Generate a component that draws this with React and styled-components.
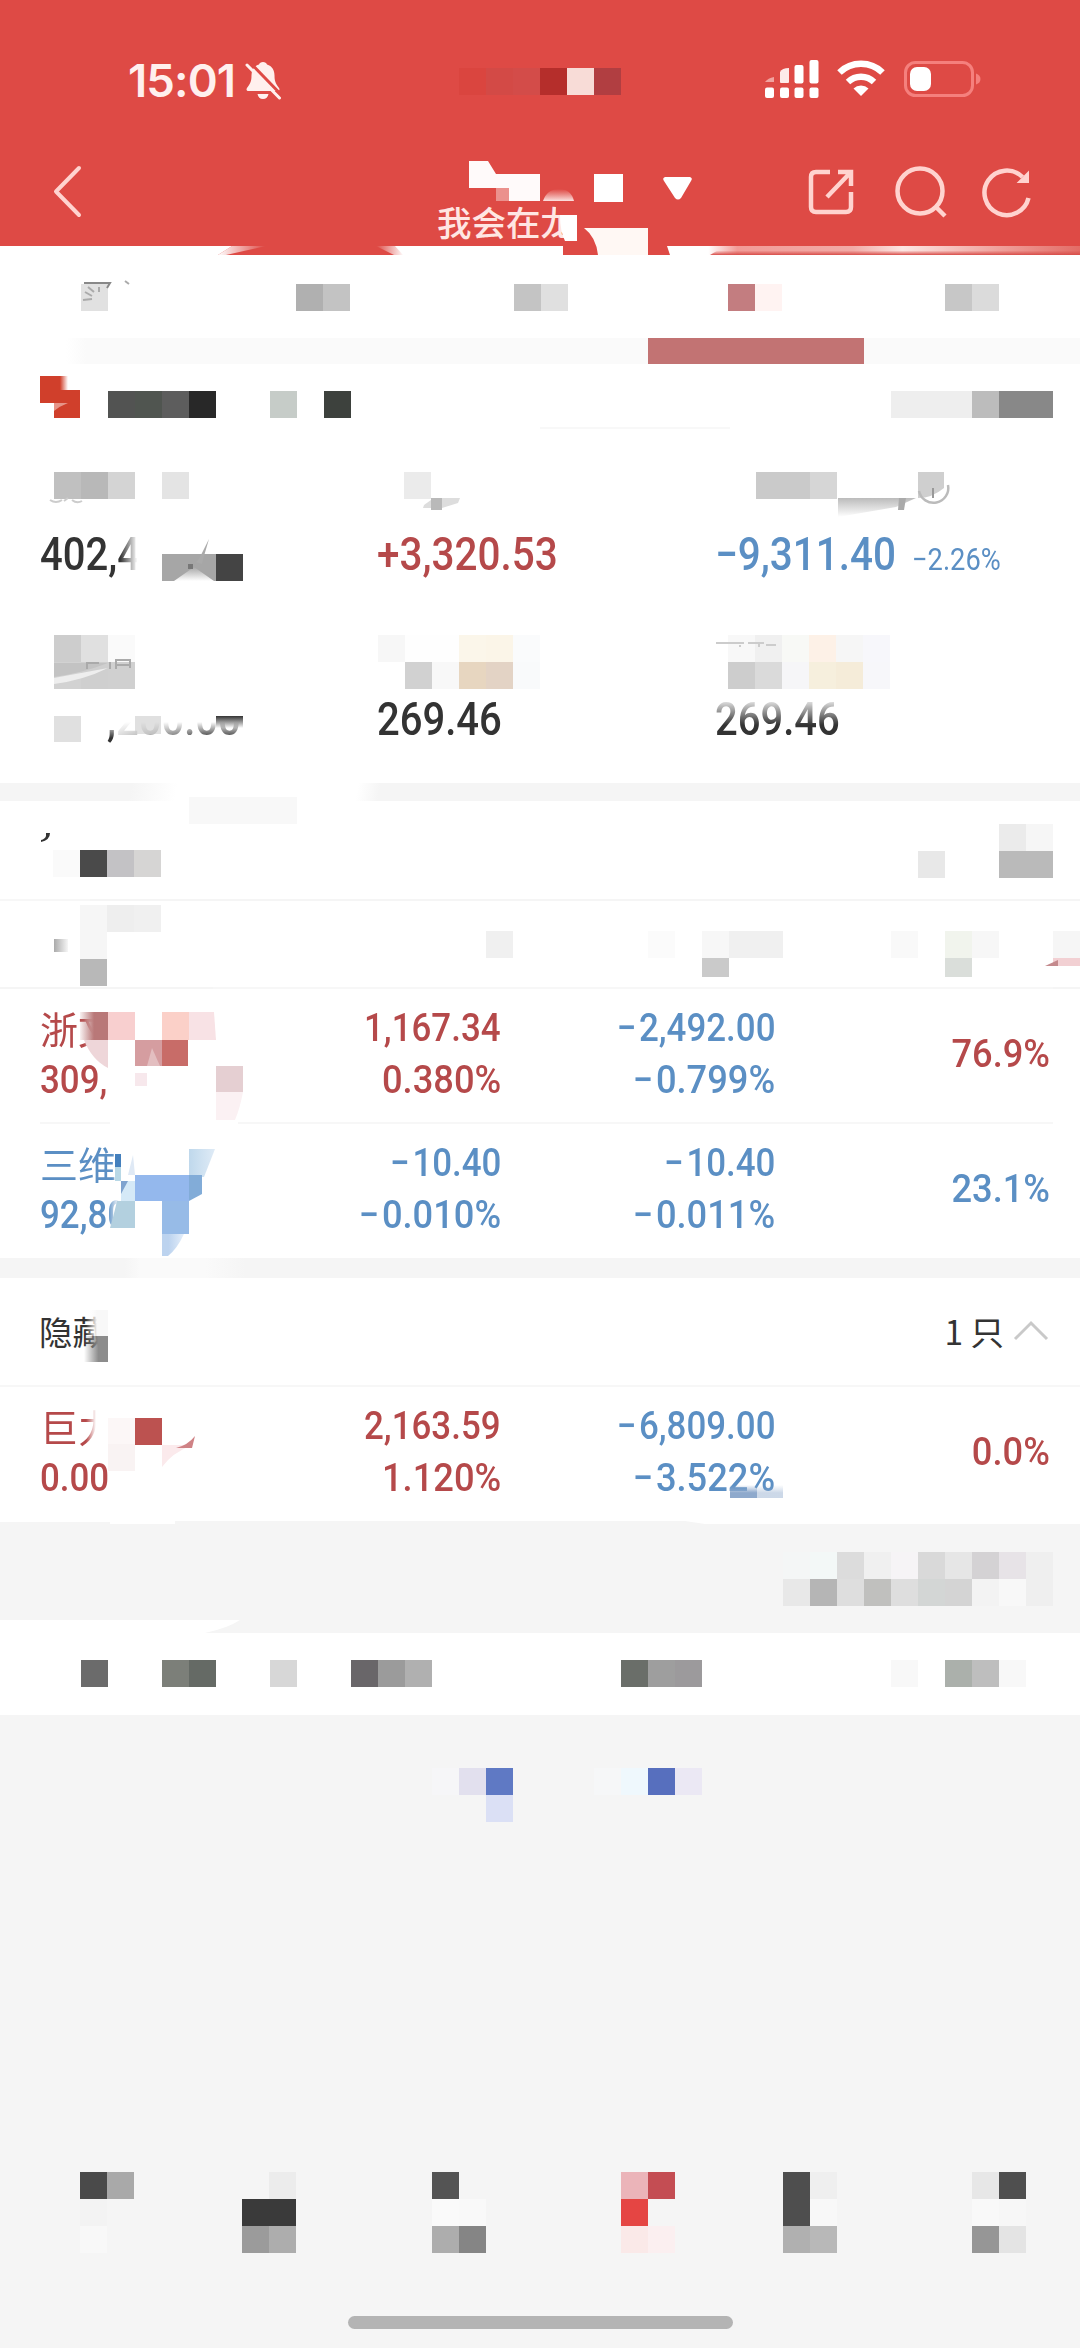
import React from "react";
import styled, { createGlobalStyle } from "styled-components";

const RED = "#b5494a";
const BLUE = "#5b8fc4";

const GlobalStyle = createGlobalStyle`
  body {
    margin: 0;
    background: #f5f5f5;
  }
  * {
    box-sizing: border-box;
  }
`;

const Page = styled.div`
  width: 1080px;
  height: 2348px;
  display: flex;
  flex-direction: column;
  background: #f5f5f5;
  color: #333;
  font-family: Roboto, "Noto Sans CJK SC", sans-serif;
  overflow: hidden;
`;

/* Mosaic: 27px cells, "" leaves a cell empty */
const MosaicGrid = styled.div`
  display: grid;
  grid-template-columns: repeat(${(p) => p.$cols}, 27px);
  grid-auto-rows: 27px;
  flex: none;
  align-self: flex-start;
  margin-left: ${(p) => p.$left || 0}px;
  margin-top: ${(p) => p.$top || 0}px;
`;

const Cell = styled.i`
  background: ${(p) => p.$color || "transparent"};
`;

const Mosaic = ({ rows, left, top }) => {
  const cells = rows.map((r) => r.split(","));
  return (
    <MosaicGrid $cols={cells[0].length} $left={left} $top={top}>
      {cells.flat().map((c, i) => (
        <Cell key={i} $color={c && `#${c}`} />
      ))}
    </MosaicGrid>
  );
};

/* Smudges lying over the content of a section */
const Overlay = styled.svg`
  position: absolute;
  left: 0;
  top: ${(p) => p.$top || 0}px;
  pointer-events: none;
  overflow: visible;
`;

const Header = styled.header`
  position: relative;
  height: 255px;
  flex: none;
  background: #de4a45;
`;

const StatusBar = styled.div`
  height: 134px;
  display: flex;
  align-items: flex-start;
  padding: 60px 99px 0 128px;
`;

const StatusIcons = styled.div`
  display: flex;
  gap: 18px;
`;

const Time = styled.span`
  width: 117px;
  font-family: Inter, sans-serif;
  font-size: 45.5px;
  line-height: 42px;
  font-weight: 600;
  letter-spacing: -0.9px;
  color: #fff0ee;
`;

const Push = styled.span`
  flex: 1;
`;

const NavBar = styled.div`
  height: 121px;
  display: flex;
  align-items: flex-start;
  padding: 30px 45px 0 51px;
`;

const TitleBox = styled.div`
  width: 260px;
  margin-left: 354px;
  height: 91px;
  display: flex;
  flex-direction: column;
  justify-content: flex-end;
`;

const Subtitle = styled.span`
  font-family: "Noto Sans CJK SC", sans-serif;
  font-size: 34.5px;
  font-weight: 500;
  line-height: 40px;
  margin-bottom: 14px;
  color: #ffe6e3;
  white-space: nowrap;
`;

const Tabs = styled.nav`
  position: relative;
  height: 83px;
  flex: none;
  display: grid;
  grid-template-columns: repeat(5, 216px);
  padding-top: 29px;
  background: #fff;
`;

const TabTrack = styled.div`
  height: 26px;
  flex: none;
  background: linear-gradient(90deg, #fff 66px, #fafafa 86px);
`;

const ActiveBar = styled.div`
  width: 216px;
  height: 27px;
  margin-left: 648px;
  background: #c27373;
`;

const Account = styled.section`
  height: 64px;
  flex: none;
  display: flex;
  padding: 0 27px 0 40px;
  background: #fff;
`;

const Stats = styled.section`
  position: relative;
  height: 355px;
  flex: none;
  display: grid;
  grid-template-columns: 337px 338px 365px;
  grid-template-rows: 163px 148px;
  padding: 44px 0 0 40px;
  background: #fff;
`;

const Stat = styled.div`
  display: flex;
  flex-direction: column;
`;

const StatLabel = styled.div`
  height: ${(p) => p.$height || 52}px;
`;

const StatValue = styled.div`
  display: flex;
  align-items: baseline;
  height: 60px;
  line-height: 60px;
  padding-left: ${(p) => p.$indent || 0}px;
  font-size: 46px;
  font-weight: 500;
  color: ${(p) => p.$color || "#333"};
  transform: scaleX(${(p) => p.$scale || 0.87});
  transform-origin: 0 50%;
  white-space: nowrap;
  -webkit-mask-image: ${(p) => p.$mask || "none"};
  mask-image: ${(p) => p.$mask || "none"};
`;

const Rate = styled.span`
  margin-left: 18px;
  font-size: 31px;
  font-weight: 400;
`;

const Band = styled.div`
  height: ${(p) => p.$height}px;
  flex: none;
  background: ${(p) => p.$fill || "#f5f5f5"};
`;

const Section = styled.section`
  position: relative;
  flex: none;
  display: flex;
  height: ${(p) => p.$height}px;
  background: ${(p) => p.$bg || "#fff"};
`;

const List = styled.div`
  position: relative;
  flex: none;
  background: #fff;
`;

const Row = styled.div`
  display: grid;
  grid-template-columns: 260px 201px 274px 275px;
  align-items: start;
  height: ${(p) => p.$height}px;
  padding: 13px 0 0 40px;
`;

const Line = styled.div`
  height: 2px;
  flex: none;
  background: #f7f7f7;
  margin: 0 ${(p) => p.$right || 0}px 0 ${(p) => p.$left || 0}px;
`;

const Pair = styled.div`
  display: flex;
  flex-direction: column;
  align-items: ${(p) => (p.$start ? "flex-start" : "flex-end")};
  height: 104px;
  justify-content: center;
  color: ${(p) => p.$color};
`;

const Num = styled.span`
  font-size: 39px;
  line-height: 52px;
  font-weight: 500;
  transform: scaleX(${(p) => (p.$percent ? 0.93 : 0.895)});
  transform-origin: ${(p) => (p.$start ? "0" : "100%")} 50%;
  white-space: nowrap;
  ${(p) => p.$fade && `
    -webkit-mask-image: linear-gradient(90deg, #000 ${p.$fade}px, transparent ${p.$fade + 12}px);
    mask-image: linear-gradient(90deg, #000 ${p.$fade}px, transparent ${p.$fade + 12}px);
  `}
`;

const Minus = styled.span`
  margin-right: 3px;
`;

const Name = styled.span`
  font-family: "Noto Sans CJK SC", sans-serif;
  font-size: 38px;
  line-height: 52px;
  white-space: nowrap;
  -webkit-mask-image: linear-gradient(90deg, #000 ${(p) => p.$fade}px, transparent ${(p) => p.$fade + 10}px);
  mask-image: linear-gradient(90deg, #000 ${(p) => p.$fade}px, transparent ${(p) => p.$fade + 10}px);
`;

const HiddenHead = styled.div`
  position: relative;
  height: 107px;
  flex: none;
  display: flex;
  align-items: center;
  justify-content: space-between;
  padding: 0 31px 2px 39px;
  background: #fff;
  font-family: "Noto Sans CJK SC", sans-serif;
  font-size: 33.5px;
  line-height: 40px;
`;

const Count = styled.span`
  display: flex;
  align-items: center;
  gap: 9px;
`;

const BottomNav = styled.nav`
  height: 82px;
  flex: none;
  display: grid;
  grid-template-columns: 161px 189px 190px 162px 188px 190px;
  margin-top: 350px;
`;

const HomeIndicator = styled.div`
  width: 385px;
  height: 13px;
  flex: none;
  margin: 62px 0 0 348px;
  border-radius: 7px;
  background: #b4b4b4;
`;

const BellOff = () => (
  <svg width="38" height="42" viewBox="0 0 38 42">
    <path d="M18 2c2 0 3.600 1 4 2.500 5 1.500 7.500 5.500 7.500 11 0 7 2 9 4.500 12.500 1 1.500.5 3-1.500 3h-29c-2 0-2.500-1.500-1.500-3C4.500 24.500 6.500 22.500 6.500 15.500c0-5.500 2.500-9.500 7.500-11C14.400 3 16 2 18 2zM12.500 34h11c-.5 3-2.500 5-5.500 5s-5-2-5.500-5z" fill="#fff0ee" />
    <path d="M4 1.500l32 33" stroke="#de4a45" strokeWidth="3" />
    <path d="M2 5l32.500 33" stroke="#fff0ee" strokeWidth="3" strokeLinecap="round" />
  </svg>
);

const Signal = () => (
  <svg width="54" height="40" viewBox="0 0 54 40">
    <path d="M0 22q3-4 9-5v5z" fill="#f1a39f" />
    <path d="M15 12q2-4 9-4v14q0 1-1 1h-7q-1 0-1-1z" fill="#fdebe9" />
    <rect x="29.500" y="5" width="9" height="18.500" rx="2" fill="#fff" />
    <rect x="44.500" y="0" width="9" height="23.500" rx="2" fill="#fff" />
    {[0, 15, 29.5, 44.5].map((x) => (
      <rect key={x} x={x} y="27.500" width="9" height="10.500" rx="2" fill="#fff" />
    ))}
  </svg>
);

const Wifi = () => (
  <svg width="48" height="38" viewBox="0 0 48 38">
    <g fill="none" stroke="#fff" strokeWidth="6.500">
      <path d="M2.500 12.500a31 31 0 0 1 43 0" />
      <path d="M11 22a19 19 0 0 1 26 0" />
    </g>
    <path d="M24 36l-7.500-7.500a11 11 0 0 1 15 0z" fill="#fff" />
  </svg>
);

const Battery = () => (
  <svg width="78" height="38" viewBox="0 0 78 38">
    <rect x="2.500" y="2.500" width="67" height="33" rx="10" fill="none" stroke="#f5807d" strokeWidth="3" />
    <rect x="7" y="7" width="21" height="24" rx="7" fill="#fff" />
    <path d="M73 13.500q4.500 1.500 4.500 5.500t-4.500 5.500z" fill="#f5807d" />
  </svg>
);

const BackIcon = () => (
  <svg width="32" height="56" viewBox="0 0 32 56">
    <path d="M28 4L5 27.500 28 51" fill="none" stroke="#ffd3cf" strokeWidth="4" strokeLinecap="round" strokeLinejoin="round" />
  </svg>
);

const Toolbar = () => (
  <svg width="232" height="56" viewBox="803 164 232 56" fill="none" stroke="#ffd3cf" strokeWidth="4.500">
    <path d="M830 172h-14q-5 0-5 5v30q0 5 5 5h30q5 0 5-5v-15" />
    <path d="M838 172h13v14M850 173l-23 24" />
    <circle cx="920" cy="191" r="22.500" />
    <path d="M936 207l9 9" />
    <path d="M1028.500 198a22.300 22.300 0 1 1-6-21" />
    <path d="M1028 173v9h-9z" fill="#ffd3cf" strokeWidth="2" />
  </svg>
);

const holdings = [
  { name: "浙文", fade: 44, amount: "309,", amountFade: 72, color: RED, day: ["1,167.34", "0.380%"], total: ["−2,492.00", "−0.799%"], part: "76.9%", height: 133 },
  { name: "三维", fade: 72, amount: "92,80", amountFade: 76, color: BLUE, day: ["−10.40", "−0.010%"], total: ["−10.40", "−0.011%"], part: "23.1%", height: 134 },
];

const hidden = { name: "巨力", fade: 46, amount: "0.00", amountFade: 90, color: RED, day: ["2,163.59", "1.120%"], total: ["−6,809.00", "−3.522%"], part: "0.0%", height: 137 };

const Amount = ({ value }) => (
  <Num $percent={value.endsWith("%")}>
    {value.startsWith("−") && <Minus>−</Minus>}
    {value.replace("−", "")}
  </Num>
);

const Holding = ({ item }) => (
  <Row $height={item.height}>
    <Pair $start $color={item.color}>
      <Name $fade={item.fade}>{item.name}</Name>
      <Num $start $fade={item.amountFade}>{item.amount}</Num>
    </Pair>
    <Pair $color={item.color}>
      <Amount value={item.day[0]} />
      <Amount value={item.day[1]} />
    </Pair>
    <Pair $color={BLUE}>
      <Amount value={item.total[0]} />
      <Amount value={item.total[1]} />
    </Pair>
    <Pair $color={item.color}>
      <Amount value={item.part} />
    </Pair>
  </Row>
);

const App = () => (
  <Page>
    <GlobalStyle />
    <Header>
      <StatusBar>
        <Time>15:01</Time>
        <BellOff />
        <Mosaic rows={["da453f,d34a46,d34c49,b52e2b,f8dcd7,b13e41"]} left={176} top={8} />
        <Push />
        <StatusIcons>
          <Signal />
          <Wifi />
          <Battery />
        </StatusIcons>
      </StatusBar>
      <NavBar>
        <BackIcon />
        <TitleBox>
          <Subtitle>我会在龙</Subtitle>
        </TitleBox>
        <Push />
        <Toolbar />
      </NavBar>
      <Overlay width="1080" height="256">
        <defs>
          <linearGradient id="streak" x1="0" x2="1">
            <stop offset="0" stopColor="#fff" />
            <stop offset=".1" stopColor="#fff" />
            <stop offset=".17" stopColor="#f29b97" />
            <stop offset=".45" stopColor="#f2aaa6" />
            <stop offset=".57" stopColor="#fde5e2" />
            <stop offset=".8" stopColor="#f0a19c" />
            <stop offset="1" stopColor="#e36c66" />
          </linearGradient>
          <linearGradient id="streakFall" x1="0" x2="0" y1="0" y2="1">
            <stop offset=".5" stopColor="#d84e4a" stopOpacity="0" />
            <stop offset="1" stopColor="#d84e4a" />
          </linearGradient>
          <linearGradient id="leftTaper" x1="0" x2="1">
            <stop offset="0" stopColor="#fff" />
            <stop offset="1" stopColor="#fff" stopOpacity="0" />
          </linearGradient>
          <linearGradient id="rightTaper" x1="0" x2="1">
            <stop offset="0" stopColor="#fff" stopOpacity="0" />
            <stop offset="1" stopColor="#fff" />
          </linearGradient>
          <linearGradient id="puff" x1="0" x2="0" y1="0" y2="1">
            <stop offset="0" stopColor="#f8cdca" stopOpacity="0" />
            <stop offset="1" stopColor="#fbe3e1" />
          </linearGradient>
        </defs>
        <path d="M469 161h19l8 13h44v27h-31q-3-9-13-13h-27z" fill="#fffafa" />
        <path d="M496 188h13v13h-13z" fill="#eb918d" />
        <path d="M543 201q4-12 16-12t15 12z" fill="url(#puff)" />
        <path d="M594 174h29v28h-29z" fill="#fff" />
        <path d="M665 177h25q3 1 1 4l-10 17q-3 3-6 0l-11-17q-2-3 1-4z" fill="#fff" />
        <path d="M556 204h20v11h-20z" fill="#de4a45" />
        <path d="M560 215h17v26h-12q-5-10-5-26z" fill="#fff" />
        <path d="M584 228h64v27h-50q-2-18-14-27z" fill="#fff8f4" />
        <path d="M0 246h232l-14 9H0zM395 246h168v9H403z" fill="#fff" />
        <path d="M232 246h34l-40 9h-8z" fill="url(#leftTaper)" />
        <path d="M376 246h20l8 9h-10z" fill="url(#rightTaper)" />
        <path d="M667 246h413v9H670z" fill="url(#streak)" />
        <path d="M725 246h355v9H710z" fill="url(#streakFall)" />
      </Overlay>
    </Header>

    <Tabs>
      <Mosaic rows={["e1e1e1"]} left={81} />
      <Mosaic rows={["b0b0b0,c3c3c3"]} left={80} />
      <Mosaic rows={["c4c4c4,e0e0e0"]} left={82} />
      <Mosaic rows={["c37d80,fff3f2"]} left={80} />
      <Mosaic rows={["c7c7c7,dbdbdb"]} left={81} />
      <Overlay width="140" height="60" $top={25}>
        <path d="M84 3h26l-3 5" fill="none" stroke="#888" strokeWidth="2" />
        <path d="M88 7l6 5M99 7v5M85 12l7 4M83 20l9-1M125 1l4 3" fill="none" stroke="#aaa" strokeWidth="2" />
      </Overlay>
    </Tabs>
    <TabTrack>
      <ActiveBar />
    </TabTrack>

    <Account>
      <svg width="41" height="54" viewBox="0 0 41 54">
        <defs>
          <linearGradient id="logoFade" x1="0" x2="1">
            <stop offset="0" stopColor="#d03f2b" />
            <stop offset="1" stopColor="#d03f2b" stopOpacity="0" />
          </linearGradient>
        </defs>
        <path d="M0 12h20v14h20v28H14V39H0z" fill="#d03f2b" />
        <path d="M20 12h8v14h-8z" fill="url(#logoFade)" />
        <path d="M14 39h14q-8 3-14 8z" fill="#e69488" />
      </svg>
      <Mosaic rows={["525352,505550,5d5d5d,282828,,,c6ccc8,,3d413d"]} left={27} top={27} />
      <Push />
      <Mosaic rows={["eeeeee,eeeeee,eeeeee,bcbcbc,888888,888888"]} top={27} />
    </Account>

    <Stats>
      <Stat>
        <StatLabel>
          <Mosaic rows={["c0c0c0,b8b8b8,d4d4d4,,e4e4e4"]} left={14} />
        </StatLabel>
        <StatValue $mask="linear-gradient(90deg, #000 92px, transparent 112px)">402,4</StatValue>
      </Stat>
      <Stat>
        <StatLabel>
          <Mosaic rows={["ebebeb"]} left={27} />
        </StatLabel>
        <StatValue $color={RED} $scale={0.88}>+3,320.53</StatValue>
      </Stat>
      <Stat>
        <StatLabel>
          <Mosaic rows={["cacaca,cacaca,d6d6d6"]} left={41} />
        </StatLabel>
        <StatValue $color={BLUE} $scale={0.88}>
          −9,311.40<Rate>−2.26%</Rate>
        </StatValue>
      </Stat>
      <Stat>
        <StatLabel $height={54}>
          <Mosaic rows={["cdcdcd,e0e0e0,fafafa", "d2d2d2,cfcfcf,d0d0d0"]} left={14} />
        </StatLabel>
        <StatValue $indent={77} $mask="linear-gradient(180deg, transparent 33px, #000 49px)">
          ,200.00
        </StatValue>
      </Stat>
      <Stat>
        <StatLabel $height={54}>
          <Mosaic rows={["f7f7f7,fefefe,fefefe,fbf6ea,fbf5e8,fafbfc", ",d1d1d1,f8f8f8,e7d6c0,e3d3c5,f9fafb"]} left={1} />
        </StatLabel>
        <StatValue>269.46</StatValue>
      </Stat>
      <Stat>
        <StatLabel $height={54}>
          <Mosaic rows={["f8f8f8,f0f0f0,f8f9f6,fdf1e7,f6f6f6,f7f7fb", "cdcdcd,dadada,f6f6f8,f6efdd,f5ecd9,f7f7fa"]} left={13} />
        </StatLabel>
        <StatValue $mask="linear-gradient(180deg, transparent 8px, #000 36px)">269.46</StatValue>
      </Stat>
      <Overlay width="1080" height="355" viewBox="0 428 1080 355">
        <defs>
          <linearGradient id="smudge" x1="0" x2="0" y1="0" y2="1">
            <stop offset="0" stopColor="#bbb" />
            <stop offset="1" stopColor="#fff" />
          </linearGradient>
          <linearGradient id="smudgeUp" x1="0" x2="0" y1="0" y2="1">
            <stop offset="0" stopColor="#333" />
            <stop offset="1" stopColor="#333" stopOpacity="0" />
          </linearGradient>
          <linearGradient id="paleRise" x1="0" x2="0" y1="0" y2="1">
            <stop offset="0" stopColor="#a6a6a6" />
            <stop offset="1" stopColor="#fff" />
          </linearGradient>
          <linearGradient id="veil" x1="0" x2="1">
            <stop offset="0" stopColor="#fff" stopOpacity=".85" />
            <stop offset="1" stopColor="#fff" stopOpacity="0" />
          </linearGradient>
        </defs>
        <path d="M540 428h190" stroke="#f8f8f8" strokeWidth="2" />
        <path d="M50 500q6 4 12 0M64 501l4-3M72 500q5 4 10 1" fill="none" stroke="#ccc" strokeWidth="2" />
        <path d="M424 505l7-5v8h-8zM442 498h18l-2 5-16 5z" fill="#ddd" />
        <path d="M431 498h11v12h-11z" fill="#b9b9b9" />
        <path d="M838 498h78l-20 9-58 10z" fill="url(#smudge)" />
        <path d="M899 498h7l-2 12h-6z" fill="#aaa" />
        <path d="M918 472h26v16q-12 10-26 10z" fill="#cfcfcf" />
        <path d="M919 491a14.500 14.500 0 0 0 29-6" fill="none" stroke="#bbb" strokeWidth="2.500" />
        <path d="M933 488v10" stroke="#999" strokeWidth="2" />
        <path d="M162 554h54v27h-54z" fill="#a6a6a6" />
        <path d="M216 554h27v27h-27z" fill="#444" />
        <path d="M174 581l20-14 20 14z" fill="url(#paleRise)" />
        <path d="M196 562l3-3 10-20-5 17-2 8z" fill="#aaa" />
        <path d="M188 564h5v5h-5z" fill="#777" />
        <path d="M54 677q28-4 54-14H54z" fill="#c3c3c3" />
        <path d="M54 684q30-4 54-16l-54 10z" fill="#eee" />
        <path d="M87 669v-6h12M110 669v-7M116 669v-9h14v8M116 665h14" fill="none" stroke="#aaa" strokeWidth="2" />
        <path d="M716 643h28M748 643h16M766 645h10M740 645v2M759 643v4" fill="none" stroke="#ccc" strokeWidth="2" />
        <path d="M54 716h27v26H54z" fill="#e0e0e0" />
        <path d="M114 706h90v36h-90z" fill="url(#veil)" />
        <path d="M135 716h26v18h-26z" fill="#ccc" fillOpacity=".6" />
        <path d="M216 716h27v12h-27z" fill="url(#smudgeUp)" />
      </Overlay>
    </Stats>

    <Band $height={18} $fill="linear-gradient(100deg, #f5f5f5 130px, #fff 175px, #fff 353px, #f5f5f5 375px)" />

    <Section $height={98}>
      <Mosaic rows={["fafafa,4a4a4a,c3c2c5,d6d5d4"]} left={53} top={49} />
      <Push />
      <Mosaic rows={[",,,ebebeb,f6f6f6,", "e8e8e8,,,bababa,bababa,"]} top={23} />
      <Overlay width="300" height="60">
        <path d="M189-4h108v27H189z" fill="#f8f8f8" />
        <path d="M46 32h4q0 7-9 9v-2q4-1 5-4z" fill="#333" />
      </Overlay>
    </Section>
    <Line $right={990} />
    <Section $height={86}>
      <Mosaic rows={[",f6f6f6,eeeeee,f0f0f0", ",f6f6f6,,", ",b8b8b8,,"]} left={53} top={4} />
      <Push />
      <Mosaic
        rows={[
          "f0f0f0,,,,,,fbfbfb,,f7f7f7,f0f0f0,f0f0f0,,,,,f9f9f9,,f1f4ed,f7f7f7,,,f6f6f6",
          ",,,,,,,,cacaca,,,,,,,,,dadeda,,,,",
        ]}
        top={30}
      />
      <Overlay width="1080" height="86" viewBox="0 901 1080 86">
        <defs>
          <linearGradient id="side" x1="0" x2="1">
            <stop offset="0" stopColor="#aaa" />
            <stop offset="1" stopColor="#f6f6f6" />
          </linearGradient>
        </defs>
        <path d="M54 939h14v13H54z" fill="url(#side)" />
        <path d="M700 977h290v9H700z" fill="#fff" />
        <path d="M1053 958h27v8h-27z" fill="#f2d0d3" />
        <path d="M1045 966l13-6v6z" fill="#c48a8d" />
      </Overlay>
    </Section>
    <Line $left={213} $right={27} />

    <List>
      <Holding item={holdings[0]} />
      <Line $left={40} $right={27} />
      <Holding item={holdings[1]} />
      <Overlay width="260" height="270" viewBox="0 989 260 270">
        <defs>
          <linearGradient id="redSide" x1="0" x2="1">
            <stop offset="0" stopColor="#b97878" stopOpacity=".1" />
            <stop offset=".5" stopColor="#b97878" />
          </linearGradient>
          <linearGradient id="blueDrop" x1="0" x2="1">
            <stop offset=".3" stopColor="#bcd3ef" />
            <stop offset="1" stopColor="#e4eefa" />
          </linearGradient>
          <linearGradient id="blueSide" x1="0" x2="1">
            <stop offset="0" stopColor="#bfd8ec" />
            <stop offset="1" stopColor="#dfebf6" />
          </linearGradient>
        </defs>
        <path d="M80 1012h28v28H80z" fill="url(#redSide)" />
        <path d="M84 1040h24v28q-16-8-24-28z" fill="#eed6d9" />
        <path d="M108 1012h27v28h-27z" fill="#f8cfcf" />
        <path d="M162 1012h27v28h-27z" fill="#fbd0c8" />
        <path d="M189 1012h25l2 28h-27z" fill="#f8e2e5" />
        <path d="M135 1040h27v26h-27z" fill="#d59da0" />
        <path d="M147 1066l5-18 8 18z" fill="#e3bec0" />
        <path d="M162 1040h26v26h-26z" fill="#c86c68" />
        <path d="M135 1073h12v13h-12z" fill="#f7e8ec" />
        <path d="M216 1066h27v26h-27z" fill="#e5cfd2" />
        <path d="M216 1092h27q-3 16-8 28h-19z" fill="#fbf1f3" />
        <path d="M110 1121h128v4H110z" fill="#fff" />
        <path d="M115 1154h6v13h-6z" fill="#4480bd" />
        <path d="M115 1167h6v14h-6z" fill="#b8d8e6" />
        <path d="M121 1181h14v20h-14z" fill="#d5e9f7" />
        <path d="M121 1181h7l-7 13z" fill="#7fa3cf" />
        <path d="M128 1175l5-20 2 20z" fill="#dfe9f5" />
        <path d="M189 1149h26l-11 28h-15z" fill="url(#blueSide)" />
        <path d="M135 1175h54v26h-54z" fill="#94b8ed" />
        <path d="M189 1175h13v19l-13 7z" fill="#82acd8" />
        <path d="M162 1201h27v33h-27z" fill="#97bbe7" />
        <path d="M162 1234h22q-7 15-16 22h-6z" fill="url(#blueDrop)" />
        <path d="M117 1201h18v27h-25q3-10 7-27z" fill="#b3d0df" />
      </Overlay>
    </List>
    <Band $height={20} $fill="linear-gradient(90deg, #f5f5f5 125px, #fafafa 140px, #fafafa 205px, #f5f5f5 245px)" />

    <HiddenHead>
      <span>隐藏</span>
      <Count>
        1 只
        <svg width="36" height="22" viewBox="0 0 36 22">
          <path d="M2 19L18 3l16 16" fill="none" stroke="#c9c9c9" strokeWidth="3" />
        </svg>
      </Count>
      <Overlay width="120" height="100" viewBox="0 1278 120 100">
        <defs>
          <linearGradient id="paper" x1="0" x2="1">
            <stop offset="0" stopColor="#fff" stopOpacity="0" />
            <stop offset=".5" stopColor="#f8f8f8" />
          </linearGradient>
          <linearGradient id="graySide" x1="0" x2="1">
            <stop offset="0" stopColor="#8c8c8c" stopOpacity="0" />
            <stop offset=".6" stopColor="#8c8c8c" />
          </linearGradient>
        </defs>
        <path d="M86 1310h22v26H86z" fill="url(#paper)" />
        <path d="M84 1336h24v26H84z" fill="url(#graySide)" />
      </Overlay>
    </HiddenHead>
    <Line />
    <List>
      <Holding item={hidden} />
      <Overlay width="1080" height="137" viewBox="0 1387 1080 137">
        <defs>
          <linearGradient id="fallBlue" x1="0" x2="0" y1="0" y2="1">
            <stop offset="0" stopColor="#8ea9cc" stopOpacity="0" />
            <stop offset=".6" stopColor="#8ea9cc" />
          </linearGradient>
        </defs>
        <path d="M108 1418h27v26h-27z" fill="#fcf7f7" />
        <path d="M108 1444h27v27h-27z" fill="#f9f3f3" />
        <path d="M135 1418h27v27h-27z" fill="#bc5250" />
        <path d="M162 1445h30q-20 8-30 22z" fill="#fbeaec" />
        <path d="M176 1448q12-3 19-12l-3 12z" fill="#cf8285" />
        <path d="M730 1485h27v13h-27z" fill="url(#fallBlue)" />
        <path d="M757 1485h26v13h-26z" fill="url(#fallBlue)" opacity=".45" />
        <path d="M0 1522h110v2H0zM175 1521h510l20 3H175z" fill="#f5f5f5" />
        <path d="M110 1524h65v6h-65z" fill="#fff" />
      </Overlay>
    </List>

    <Section $height={109} $bg="#f5f5f5">
      <Push />
      <Mosaic
        rows={[
          "f4f6f6,f3f8f7,dcdcdc,f0f0f0,f6f4f6,d9d9d9,e6e6e6,d4d2d4,e7e3e7,efefef,",
          "e8e8e8,b5b5b5,dedede,c0c0be,dedede,d3d6d5,d4d4d4,f3f3f3,f8f8f8,efefef,",
        ]}
        top={28}
      />
    </Section>
    <Section $height={82}>
      <Mosaic
        rows={["6b6b6b,,,7c7f79,656a65,,,d7d7d7,,,696669,9b9b9b,b0b0b0,,,,,,,,6a6e69,9e9e9e,9c9a9c,,,,,,,,f8f8f8,,abb0ab,bebebe,f8f8f8"]}
        left={81}
        top={27}
      />
      <Overlay width="300" height="82">
        <path d="M0-13h240q-12 8-35 13H0z" fill="#fff" />
      </Overlay>
    </Section>
    <Section $height={107} $bg="#f5f5f5">
      <Mosaic
        rows={["f6f6f8,e2e0ee,5f79c4,,,,f6f7f8,eff8fd,576fbe,ebe8f4", ",,dbe0f5,,,,,,,"]}
        left={432}
        top={53}
      />
    </Section>

    <BottomNav>
      <Mosaic rows={["4a4a4a,a9a9a9", "f3f3f3,", "f8f8f8,"]} left={80} />
      <Mosaic rows={[",ececec", "3a3a3a,3a3a3a", "9b9b9b,adadad"]} left={81} />
      <Mosaic rows={["545454,", "fafafa,f9f9f9", "adadad,858585"]} left={82} />
      <Mosaic rows={["ebb4b9,c44d53", "e54543,", "fae9e8,fbeff0"]} left={81} />
      <Mosaic rows={["4e4e4e,efefef", "4e4e4e,f8f8f8", "b0b0b0,b8b8b8"]} left={81} />
      <Mosaic rows={["e7e7e7,4f4f4f", "f9f9f9,f7f7f7", "969696,e4e4e4"]} left={82} />
    </BottomNav>
    <HomeIndicator />
  </Page>
);

export default App;
